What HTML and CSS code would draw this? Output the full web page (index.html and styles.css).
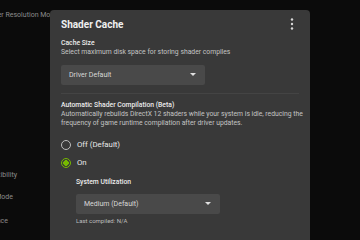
FILE: index.html
```html
<!DOCTYPE html>
<html lang="en">
<head>
    <meta charset="UTF-8">
    <meta name="viewport" content="width=device-width, initial-scale=1.0">
    <title>Shader Cache</title>
    <link rel="stylesheet" href="styles.css">
</head>
<body>
    <div class="page">
        <div class="side-list">
            <div class="side-item first"><span>Render Resolution Mode</span></div>
            <div class="side-item compat"><span>Compatibility</span></div>
            <div class="side-item mode"><span>Low Latency Mode</span></div>
            <div class="side-item ce"><span>Performance</span></div>
        </div>
        <div class="panel">
            <div class="panel-header">
                <h2>Shader Cache</h2>
                <svg class="kebab" width="4" height="12" viewBox="0 0 4 12">
                    <circle cx="2" cy="1.5" r="1.2" fill="#d8d8d8"/>
                    <circle cx="2" cy="6" r="1.2" fill="#d8d8d8"/>
                    <circle cx="2" cy="10.5" r="1.2" fill="#d8d8d8"/>
                </svg>
            </div>
            <div class="section">
                <div class="label">Cache Size</div>
                <div class="desc">Select maximum disk space for storing shader compiles</div>
                <div class="select">
                    <span>Driver Default</span>
                    <span class="caret"></span>
                </div>
            </div>
            <div class="divider"></div>
            <div class="section">
                <div class="label">Automatic Shader Compilation (Beta)</div>
                <div class="desc wide">Automatically rebuilds DirectX 12 shaders while your system is idle, reducing the frequency of game runtime compilation after driver updates.</div>
                <div class="radio-row off">
                    <span class="radio"></span>
                    <span>Off (Default)</span>
                </div>
                <div class="radio-row on">
                    <span class="radio checked"></span>
                    <span>On</span>
                </div>
                <div class="sub">
                    <div class="label">System Utilization</div>
                    <div class="select">
                        <span>Medium (Default)</span>
                        <span class="caret"></span>
                    </div>
                    <div class="last">Last compiled: N/A</div>
                </div>
            </div>
        </div>
    </div>
</body>
</html>
```

FILE: styles.css
```css
* {
    margin: 0;
    padding: 0;
    box-sizing: border-box;
    font-family: Roboto, "Noto Sans", sans-serif;
}
body {
    background-color: #0b0b0b;
    width: 360px;
    height: 240px;
    overflow: hidden;
}
.page {
    display: flex;
    height: 240px;
    padding-top: 10px;
}
.side-list {
    width: 50px;
    overflow: hidden;
    color: #8c8c8c;
    font-size: 7px;
}
.side-item {
    display: flex;
    justify-content: flex-end;
    white-space: nowrap;
    height: 10px;
    line-height: 10px;
}
.first {
    width: 58px;
}
.compat {
    width: 17px;
    margin-top: 150px;
}
.mode {
    width: 13px;
    margin-top: 12px;
}
.ce {
    width: 8px;
    margin-top: 14px;
}
.panel {
    width: 260px;
    background-color: #393939;
    border-radius: 4px 4px 0 0;
    padding: 0 11px;
    color: #e8e8e8;
}
.panel-header {
    display: flex;
    justify-content: space-between;
    align-items: center;
    height: 28px;
}
h2 {
    font-size: 10px;
    font-weight: 700;
    color: #f0f0f0;
}
.kebab {
    margin-right: 5px;
}
.label {
    font-size: 6.8px;
    font-weight: 500;
    color: #ececec;
    line-height: 10px;
}
.desc {
    font-size: 6.8px;
    color: #c4c4c4;
    line-height: 9.5px;
}
.desc.wide {
    margin-right: -12px;
}
.select {
    display: flex;
    justify-content: space-between;
    align-items: center;
    width: 144px;
    height: 20px;
    background-color: #494949;
    border-radius: 2px;
    padding: 0 8px;
    font-size: 7px;
    color: #d8d8d8;
    margin-top: 7px;
}
.caret {
    width: 0;
    height: 0;
    border-left: 3px solid transparent;
    border-right: 3px solid transparent;
    border-top: 3px solid #e0e0e0;
    margin-right: 1px;
}
.divider {
    height: 1px;
    background-color: #444444;
    margin: 8px 0 6px;
}
.radio-row {
    display: flex;
    align-items: center;
    gap: 6px;
    font-size: 7.8px;
    color: #e8e8e8;
    height: 18px;
}
.off {
    margin-top: 7px;
}
.radio {
    width: 10px;
    height: 10px;
    border-radius: 50%;
    border: 1px solid #bdbdbd;
}
.radio.checked {
    border: 1.5px solid #76b900;
    background: radial-gradient(circle, #76b900 0 2.6px, transparent 3px);
}
.sub {
    padding-left: 15px;
    margin-top: 5px;
}
.last {
    font-size: 6px;
    color: #bdbdbd;
    margin-top: 3px;
}
```
